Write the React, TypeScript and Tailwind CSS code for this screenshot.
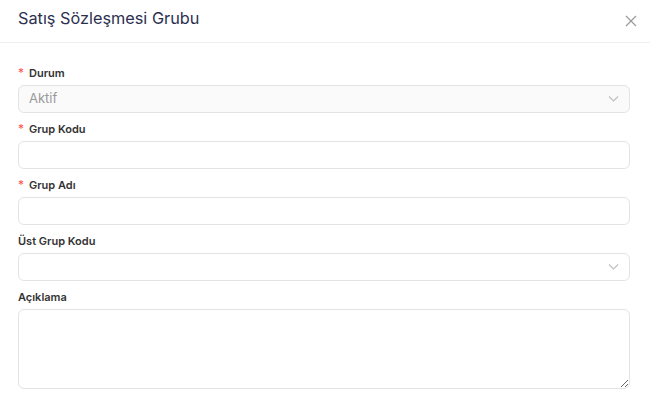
import React from "react";

const Chevron = () => (
  <svg width="11" height="7" viewBox="0 0 11 7" fill="none" className="absolute right-[10px] top-1/2 -translate-y-1/2">
    <path d="M1 1l4.5 4.5L10 1" stroke="#bfbfbf" strokeWidth="1.1" />
  </svg>
);

const Label = ({ text, required }: { text: string; required?: boolean }) => (
  <div className="h-4 flex items-center text-[11px] font-semibold text-[#333333] mb-1 leading-4">
    {required && <span className="text-[#ff4d4f] mr-[5px] text-[12px] font-normal">*</span>}
    {text}
  </div>
);

export default function App() {
  return (
    <div className="w-[650px] h-[406px] bg-white overflow-hidden" style={{ fontFamily: "Inter, 'Noto Sans', sans-serif" }}>
      <div className="h-[43px] border-b border-[#f0f0f0] flex items-center justify-between pl-[18px] pr-[12px] pb-[5px]">
        <div className="text-[16.3px] text-[#2c3050]">Satış Sözleşmesi Grubu</div>
        <svg width="12" height="12" viewBox="0 0 12 12" className="mt-[4px] mr-[1px]">
          <path d="M1 1l10 10M11 1L1 11" stroke="#9a9a9a" strokeWidth="1.2" />
        </svg>
      </div>
      <div className="pl-[18px] pt-[22px] w-[630px]">
        <Label text="Durum" required />
        <div className="relative h-[28px] rounded-[6px] border border-[#e3e3e3] bg-[#fafafa] flex items-center px-[10px] text-[13px] text-[#999999] mb-2">
          Aktif
          <Chevron />
        </div>
        <Label text="Grup Kodu" required />
        <div className="h-[28px] rounded-[6px] border border-[#e3e3e3] bg-white mb-2" />
        <Label text="Grup Adı" required />
        <div className="h-[28px] rounded-[6px] border border-[#e3e3e3] bg-white mb-2" />
        <Label text="Üst Grup Kodu" />
        <div className="relative h-[28px] rounded-[6px] border border-[#e3e3e3] bg-white mb-2">
          <Chevron />
        </div>
        <Label text="Açıklama" />
        <textarea className="block w-full h-[80px] rounded-[6px] border border-[#e3e3e3] bg-white outline-none resize-y" />
      </div>
    </div>
  );
}
